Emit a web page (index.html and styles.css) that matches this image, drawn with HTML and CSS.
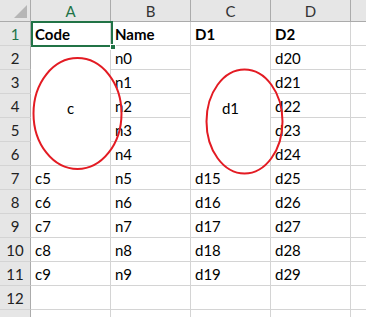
FILE: index.html
```html
<!DOCTYPE html>
<html>
<head>
<meta charset="utf-8">
<link rel="stylesheet" href="styles.css">
</head>
<body>
<div class="sheet">
  <div class="grid">
    <div class="corner"><span class="tri"></span></div>
    <div class="ch sel">A</div>
    <div class="ch">B</div>
    <div class="ch">C</div>
    <div class="ch">D</div>
    <div class="ch last"></div>

    <div class="rh sel">1</div>
    <div class="c b">Code</div>
    <div class="c b">Name</div>
    <div class="c b">D1</div>
    <div class="c b">D2</div>
    <div class="c e"></div>

    <div class="rh">2</div>
    <div class="c merged ma">c</div>
    <div class="c">n0</div>
    <div class="c merged mc">d1</div>
    <div class="c">d20</div>
    <div class="c e"></div>

    <div class="rh">3</div>
    <div class="c">n1</div>
    <div class="c">d21</div>
    <div class="c e"></div>

    <div class="rh">4</div>
    <div class="c">n2</div>
    <div class="c">d22</div>
    <div class="c e"></div>

    <div class="rh">5</div>
    <div class="c">n3</div>
    <div class="c">d23</div>
    <div class="c e"></div>

    <div class="rh">6</div>
    <div class="c">n4</div>
    <div class="c">d24</div>
    <div class="c e"></div>

    <div class="rh">7</div>
    <div class="c">c5</div><div class="c">n5</div><div class="c">d15</div><div class="c">d25</div><div class="c e"></div>
    <div class="rh">8</div>
    <div class="c">c6</div><div class="c">n6</div><div class="c">d16</div><div class="c">d26</div><div class="c e"></div>
    <div class="rh">9</div>
    <div class="c">c7</div><div class="c">n7</div><div class="c">d17</div><div class="c">d27</div><div class="c e"></div>
    <div class="rh">10</div>
    <div class="c">c8</div><div class="c">n8</div><div class="c">d18</div><div class="c">d28</div><div class="c e"></div>
    <div class="rh">11</div>
    <div class="c">c9</div><div class="c">n9</div><div class="c">d19</div><div class="c">d29</div><div class="c e"></div>
    <div class="rh">12</div>
    <div class="c"></div><div class="c"></div><div class="c"></div><div class="c"></div><div class="c e"></div>
    <div class="rh"></div>
    <div class="c"></div><div class="c"></div><div class="c"></div><div class="c"></div><div class="c e"></div>
  </div>
  <div class="selbox"><span class="handle"></span></div>
  <svg class="shapes" width="366" height="317" viewBox="0 0 366 317">
    <ellipse cx="77.5" cy="113.5" rx="44" ry="55.5" fill="none" stroke="#e31b23" stroke-width="2"/>
    <ellipse cx="244.5" cy="121.5" rx="38" ry="52" fill="none" stroke="#e31b23" stroke-width="2"/>
  </svg>
</div>
</body>
</html>
```
FILE: styles.css
```css
* { box-sizing: border-box; }
html, body { margin: 0; padding: 0; background: #fff; }
body { font-family: Lato, "Noto Sans", "Liberation Sans", sans-serif; font-size: 15px; color: #000; }
.sheet { position: relative; width: 366px; height: 317px; overflow: hidden; }
.grid {
  display: grid;
  grid-template-columns: 31px 80px 80px 80px 80px 15px;
  grid-template-rows: 22px repeat(12, 24px) 24px;
}
.corner { background: #e6e6e6; border-right: 1px solid #ababab; border-bottom: 1px solid #ababab; position: relative; }
.tri {
  position: absolute; right: 3px; bottom: 3px; width: 0; height: 0;
  border-left: 13px solid transparent; border-bottom: 13px solid #b6b6b6;
}
.ch {
  background: #e6e6e6; border-right: 1px solid #ababab; border-bottom: 1px solid #ababab;
  display: flex; align-items: center; justify-content: center; color: #333; font-size: 15px; padding-top: 1px;
}
.ch.last { border-right: none; }
.ch.sel { color: #217346; }
.rh {
  background: #e6e6e6; border-right: 1px solid #ababab; border-bottom: 1px solid #d4d4d4;
  display: flex; align-items: center; justify-content: center; color: #222; font-size: 15px;
}
.rh.sel { color: #217346; }
.c {
  border-right: 1px solid #d4d4d4; border-bottom: 1px solid #d4d4d4;
  display: flex; align-items: flex-end; padding: 0 0 2px 4px; white-space: nowrap; line-height: 18px;
}
.c.e { border-right: none; }
.c.b { font-weight: bold; }
.merged { justify-content: center; align-items: center; padding: 4px 0 0 0; }
.ma { grid-column: 2; grid-row: 3 / span 5; }
.mc { grid-column: 4; grid-row: 3 / span 5; }
.selbox {
  position: absolute; left: 31px; top: 21px; width: 82px; height: 26px;
  border: 2px solid #217346;
}
.handle {
  position: absolute; right: -5px; bottom: -5px; width: 6px; height: 6px;
  background: #217346; border: 1px solid #fff;
}
.shapes { position: absolute; left: 0; top: 0; pointer-events: none; }
```
